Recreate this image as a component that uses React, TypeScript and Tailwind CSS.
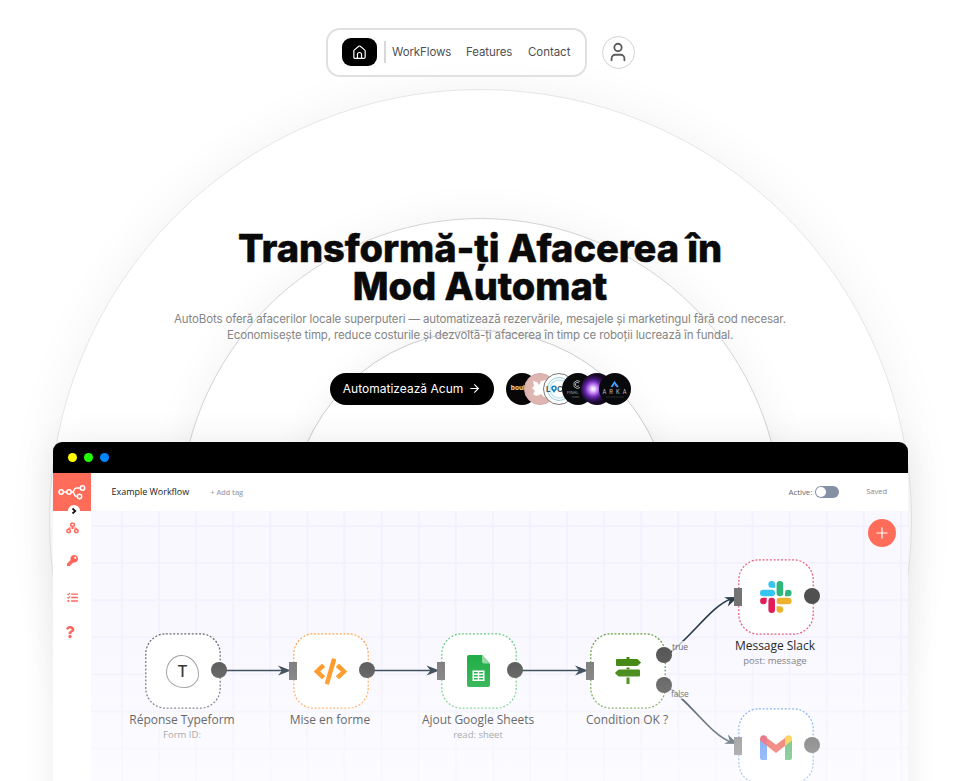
import React from "react";
import { User, ArrowRight } from "lucide-react";
import { FaKey, FaQuestion, FaCode, FaTasks } from "react-icons/fa";

const rings = [
  "left-[49px] top-[88.5px] h-[863px] w-[863px] border-[#e6e6e6] shadow-[0_0_50px_rgba(0,0,0,0.055)]",
  "left-[179px] top-[218px] h-[603px] w-[603px] border-[#d3d3d3] shadow-[0_0_44px_rgba(0,0,0,0.055)]",
  "left-[290px] top-[330px] h-[381px] w-[381px] border-[#cccccc] shadow-[0_0_36px_rgba(0,0,0,0.055)]",
];

function Nav() {
  return (
    <nav className="flex items-center justify-center gap-[15px] pr-px pt-[27.5px]">
      <div className="flex h-[49px] w-[261px] items-center rounded-[14px] border-2 border-[#e0e0e0] bg-white/60 pl-[14px]">
        <span className="flex h-[28px] w-[35px] items-center justify-center rounded-[9px] bg-black text-white">
          <svg width="13" height="15" viewBox="0 0 14 16" fill="none" stroke="#fff" strokeWidth="1.3" strokeLinejoin="round">
            <path d="M.9 6.4q0-.7.6-1.2L6.2 1.3q.8-.6 1.6 0l4.7 3.9q.6.5.6 1.2v6.4q0 1.6-1.6 1.6h-9q-1.6 0-1.6-1.6z" />
            <path d="M4.8 14V10.200a2.200 2.200 0 0 1 4.400 0V14" />
          </svg>
        </span>
        <span className="ml-[7px] h-[22px] w-[2px] bg-[#d8d8d8]" />
        <div className="ml-[6.5px] flex gap-[15px] whitespace-nowrap text-[11.5px] leading-4 text-[#505050]">
          <a className="w-[59px] tracking-[-0.1px]">WorkFlows</a>
          <a className="w-[47px] tracking-[-0.1px]">Features</a>
          <a className="tracking-[-0.05px]">Contact</a>
        </div>
      </div>
      <div className="flex h-[33px] w-[33px] items-center justify-center rounded-full border-[1.5px] border-[#d2d2d2] bg-white text-[#5c5c5c]">
        <User size={22} strokeWidth={2} />
      </div>
    </nav>
  );
}

function Avatars() {
  return (
    <div className="flex pl-[12px] [&>*]:shrink-0">
      <span className="flex h-8 w-8 items-center overflow-hidden rounded-full bg-[#080606] pl-[5px] text-[6.5px] font-extrabold text-[#e0cd96]">boul</span>
      <span className="-ml-[13.3px] flex h-8 w-8 items-center overflow-hidden rounded-full border border-[#d2aaa7] bg-[#dfb5b1] pl-[7px]">
        <svg width="15" height="17" viewBox="0 0 15 17" fill="#fff"><path d="M1 1l4 1 2 3 2-4 6-1v17h-3l-3-3-2 1-3 1-3-2 2-3-3-3 2-2z" /></svg>
      </span>
      <span className="-ml-[13.3px] flex h-8 w-8 items-center justify-center overflow-hidden rounded-full border border-[#777] bg-white">
        <svg width="30" height="30" viewBox="0 0 30 30" fill="none">
          <circle cx="15" cy="15" r="11.5" stroke="#94ccdc" strokeWidth="1" />
          <circle cx="15" cy="15" r="9" stroke="#c9e8ee" strokeWidth="1.5" />
          <circle cx="10" cy="14.3" r="2" fill="#fff" stroke="#1685c4" strokeWidth="1.6" /><path d="M8.5 16.500L10 19L11.500 16.500" fill="#1685c4" />
          <text x="2" y="17.500" fill="#365b6e" fontSize="8" fontWeight="700">L</text>
          <text x="13" y="17.500" fill="#365b6e" fontSize="8" fontWeight="700">C</text>
        </svg>
      </span>
      <span className="-ml-[13.3px] h-8 w-8 overflow-hidden rounded-full bg-[#090a0c]">
        <svg width="32" height="32" viewBox="0 0 32 32" fill="none">
          <path d="M18 8.500l-3-1-3 2v4l3 2 3-1M17 10l-2-.7-1.500 1v2.200l1.500 1 2-.7" stroke="#a9aaad" strokeWidth="1" />
          <text x="5" y="21" fill="#aaa" fontSize="4">FINAL</text><text x="10" y="24.500" fill="#777" fontSize="2.500">studio</text>
        </svg>
      </span>
      <span className="-ml-[13.3px] h-8 w-8 overflow-hidden rounded-full bg-[radial-gradient(circle_at_38%_50%,#f7e9ff_0_5%,#cf9df7_14%,#a05be0_23%,#6e2bb0_31%,#35125f_43%,#14091f_58%)]" />
      <span className="-ml-[13.3px] h-8 w-8 overflow-hidden rounded-full bg-[#08090c]">
        <svg width="32" height="32" viewBox="0 0 32 32" fill="none">
          <path d="M12.500 14l3-4.500 3.500 4.500" stroke="#3da7ff" strokeWidth="1.8" /><path d="M16 12l2.500 2" stroke="#7e65e6" strokeWidth="1.3" />
          <text x="3.500" y="21" fill="#c5c5c5" fontSize="5.500" textLength="24">ARKA</text>
          <path d="M7 24h18" stroke="#555" strokeWidth=".7" strokeDasharray="1 .6" />
        </svg>
      </span>
    </div>
  );
}

function Hero() {
  return (
    <header className="flex h-[365.5px] flex-col items-center pr-px pt-[152px] text-center">
      <h1 className="whitespace-nowrap text-[38px] font-extrabold leading-[38px] tracking-[-0.07px] text-[#0a0a0a] [-webkit-text-stroke:0.5px_#0a0a0a]">
        Transformă-ți Afacerea în<br />Mod Automat
      </h1>
      <p className="mt-[6px] whitespace-nowrap text-[11.5px] leading-4 tracking-[-0.13px] text-[#858585]">
        AutoBots oferă afacerilor locale superputeri — automatizează rezervările, mesajele și marketingul fără cod necesar.<br />
        Economisește timp, reduce costurile și dezvoltă-ți afacerea în timp ce roboții lucrează în fundal.
      </p>
      <div className="mt-[30px] flex items-center pl-px">
        <button className="flex h-8 w-[164px] items-center whitespace-nowrap rounded-full bg-black pl-[13px] text-[12px] text-white">
          <span className="w-[121px] text-left tracking-[0.02px]">Automatizează Acum</span>
          <ArrowRight className="ml-[4px] shrink-0" size={13} strokeWidth={2} />
        </button>
        <Avatars />
      </div>
    </header>
  );
}

function Sidebar() {
  return (
    <aside className="flex w-[38px] shrink-0 flex-col items-center bg-white text-[#ff6659]">
      <div className="relative flex h-[38px] w-[38px] items-center justify-center bg-[#ff6d5a]">
        <svg width="28" height="18" viewBox="0 0 28 18" fill="none" stroke="#fff" strokeWidth="1.5">
          <circle cx="3.2" cy="9" r="2.2" /><circle cx="11" cy="9" r="2.2" /><circle cx="24.500" cy="5" r="2.2" /><circle cx="21.500" cy="13.500" r="2.2" />
          <path d="M5.500 9h3.200M13.200 9h1.300c2 0 .8-4 4-4h3.500M14.500 9c2 0 1 4.500 4.500 4.500" />
        </svg>
        <span className="absolute left-[15px] top-[32px] flex h-3 w-3 items-center justify-center rounded-full bg-white">
          <svg width="6" height="8" viewBox="0 0 6 8" fill="none" stroke="#111" strokeWidth="1.7"><path d="M1.500 1.500L4.300 4L1.500 6.500" /></svg>
        </span>
      </div>
      <svg className="mt-[11px] ml-px" width="13" height="12" viewBox="0 0 13 12" fill="none" stroke="currentColor" strokeWidth="1.5">
        <rect x="4.700" y="1.200" width="3.600" height="3" rx="1" /><rect x="1" y="7.500" width="3.300" height="3" rx="1" /><rect x="8.700" y="7.500" width="3.300" height="3" rx="1" /><path d="M6.500 4v3M2.700 7V6h7.600v1" strokeWidth="1" />
      </svg>
      <FaKey className="mt-[21px]" size={11} />
      <FaTasks className="mt-[26px]" size={11} />
      <FaQuestion className="mt-[23px] -ml-[4px]" size={12} />
    </aside>
  );
}

function SlackMark() {
  return (
    <svg width="32" height="32" viewBox="0 0 32 32">
      <g fill="#36c5f0"><rect x="0" y="8.700" width="15" height="6.600" rx="3.300" /><path d="M15 6.700h-3.300a3.300 3.300 0 1 1 3.300-3.300z" /></g>
      <g fill="#2eb67d"><rect x="16.600" y="0" width="6.600" height="15.300" rx="3.300" /><path d="M25 15.300V12a3.300 3.300 0 1 1 3.300 3.300z" /></g>
      <g fill="#ecb22e"><rect x="16.600" y="16.700" width="15" height="6.600" rx="3.300" /><path d="M16.600 25.300h3.300a3.300 3.300 0 1 1-3.300 3.300z" /></g>
      <g fill="#e01e5a"><rect x="8.400" y="16.700" width="6.600" height="15.300" rx="3.300" /><path d="M6.700 16.700V20a3.300 3.300 0 1 1-3.300-3.300z" /></g>
    </svg>
  );
}

function GmailMark() {
  return (
    <svg width="32" height="25" viewBox="0 0 32 25">
      <path fill="#4285f4" d="M0 5l7 5v15H2a2 2 0 0 1-2-2z" /><path fill="#34a853" d="M25 10l7-5v18a2 2 0 0 1-2 2h-5z" />
      <path fill="#ea4335" d="M7 3l9 6.700L25 3v8l-9 7-9-7z" /><path fill="#d92c45" d="M0 4C0 0 4-1 7 2v9L0 5.500z" /><path fill="#fbbc04" d="M25 2c3-3 7-2 7 2v1.500L25 11z" />
    </svg>
  );
}

function SheetsMark() {
  return (
    <svg width="24" height="32" viewBox="0 0 24 32">
      <path fill="#12a93a" d="M2 0h13l8 8.500V30a2 2 0 0 1-2 2H2a2 2 0 0 1-2-2V2a2 2 0 0 1 2-2z" /><path fill="#8ed5a0" d="M15 0l8 8.500h-6a2 2 0 0 1-2-2z" />
      <path fill="none" stroke="#fff" strokeWidth="1.400" d="M6.200 16.200h10.600v9H6.200zM6 19.200h11M6 22.200h11M11.500 16v9" />
    </svg>
  );
}

function SignsMark() {
  return (
    <svg width="26" height="28" viewBox="0 0 26 28" fill="#348000">
      <path d="M11.500 0h3v2h-3zM11.500 10.500h3v2h-3zM11.500 20.500h3V27h-3z" />
      <path d="M2 2h20q.6 0 1 .4l2.600 2.500q.6.600 0 1.200L23 8.600q-.4.400-1 .4H2q-1 0-1-1V3q0-1 1-1z" />
      <path d="M24 12.500H4q-.6 0-1 .4L.4 15.400q-.6.600 0 1.200L3 19.100q.4.400 1 .4h20q1 0 1-1v-5q0-1-1-1z" />
    </svg>
  );
}

function TypeformMark() {
  return (
    <span className="flex h-[33px] w-[33px] items-center justify-center rounded-[47%_53%_46%_54%/53%_60%_40%_47%] border border-[#999]">
      <span className="font-['Inter',sans-serif] text-[16px] font-medium text-[#222]">T</span>
    </span>
  );
}

const nodes = [
  { box: "left-[54px] top-[122px]", stroke: "#65666c", label: "Réponse Typeform", sub: "Form ID:", icon: <TypeformMark />, input: false, output: true },
  { box: "left-[202px] top-[122px]", stroke: "#ffa250", label: "Mise en forme", sub: "", icon: <FaCode size={33} color="#ff9015" />, input: true, output: true },
  { box: "left-[350px] top-[122px]", stroke: "#67c77f", label: "Ajout Google Sheets", sub: "read: sheet", icon: <SheetsMark />, input: true, output: true },
  { box: "left-[499px] top-[122px]", stroke: "#639c3d", label: "Condition OK ?", sub: "", icon: <SignsMark />, input: true, output: false },
  { box: "left-[647px] top-[48px]", stroke: "#e75b7c", label: "Message Slack", sub: "post: message", icon: <SlackMark />, input: true, output: true },
  { box: "left-[647px] top-[196.5px]", stroke: "#5b98f0", label: "", sub: "", icon: <span className="pt-1"><GmailMark /></span>, input: true, output: true },
];

function Canvas() {
  return (
    <div className="relative min-h-0 flex-1 overflow-hidden bg-[#f9f8ff] bg-[linear-gradient(to_right,#f3f1fd_1.5px,transparent_1.5px),linear-gradient(to_bottom,#f3f1fd_1.5px,transparent_1.5px)] bg-[size:37.1px_37.1px] bg-[position:30px_14px]">
      <svg className="absolute inset-0" width="817" height="270" fill="none" stroke="#2b3b4a" strokeWidth="1.7">
        <path d="M129 159.500H192M277 159.500H340M425 159.500H488" />
        <path d="M575 145C602 125 620 95 640 88M575 174C602 194 620 224 640 231" />
        <g fill="#2b3b4a" stroke="none">
          {[200, 348.500, 497].map((x) => <path key={x} transform={`translate(${x} 159.5)`} d="M0 0L-13-5L-9 0L-13 5Z" />)}
          <path transform="translate(647 86) rotate(-22)" d="M0 0L-13-5L-9 0L-13 5Z" /><path transform="translate(647 233) rotate(22)" d="M0 0L-13-5L-9 0L-13 5Z" />
        </g>
      </svg>
      {nodes.map((n, i) => (
        <div key={i} className={"absolute h-[76px] w-[76px] rounded-[21px] bg-white " + n.box}>
          <svg className="absolute inset-0" width="76" height="76" fill="none">
            <rect x=".8" y=".8" width="74.400" height="74.400" rx="20" stroke={n.stroke} strokeWidth="1.250" strokeDasharray="2 1.700" />
          </svg>
          <div className="flex h-full items-center justify-center pr-px">{n.icon}</div>
          {n.input && <span className="absolute -left-[4px] top-[29px] h-[18px] w-2 bg-[#747474]" />}
          {n.output && <span className="absolute -right-[6px] top-[29px] h-4 w-4 rounded-full bg-[#505050]" />}
          {!n.output && <><span className="absolute -right-[6px] top-[14px] h-4 w-4 rounded-full bg-[#505050]" /><span className="absolute -right-[6px] top-[44px] h-4 w-4 rounded-full bg-[#505050]" /></>}
          <div className="absolute left-[37px] top-[78px] w-[140px] -translate-x-1/2 whitespace-nowrap text-center">
            <div className="text-[12px] leading-[18px] tracking-[-0.02px] text-[#242424]">{n.label}</div><div className="text-[9.5px] leading-[12px] text-[#777]">{n.sub}</div>
          </div>
        </div>
      ))}
      <span className="absolute left-[581px] top-[130px] bg-[#f9f8ff]/70 text-[8.5px] leading-[11px] tracking-[-0.15px] text-[#666]">true</span>
      <span className="absolute left-[580px] top-[177px] bg-[#f9f8ff]/70 text-[8.5px] leading-[11px] tracking-[-0.2px] text-[#555]">false</span>
      <button className="absolute left-[777px] top-[8px] flex h-7 w-7 items-center justify-center rounded-full bg-[#ff6d5a]">
        <svg width="12" height="12" stroke="#fff" strokeWidth="1.2"><path d="M6 .5v11M.5 6h11" /></svg>
      </button>
    </div>
  );
}

function WorkflowWindow() {
  return (
    <section className="relative ml-[53px] flex h-[339px] w-[855px] flex-col overflow-hidden rounded-t-[9px] bg-white font-['Open_Sans','Noto_Sans',sans-serif]">
      <div className="flex h-[31px] shrink-0 items-center gap-[7px] bg-black pl-[15px]">
        <span className="h-[9px] w-[9px] rounded-full bg-[#fffb00]" /><span className="h-[9px] w-[9px] rounded-full bg-[#20ff00]" /><span className="h-[9px] w-[9px] rounded-full bg-[#0087ff]" />
      </div>
      <div className="flex min-h-0 flex-1">
        <Sidebar />
        <div className="flex min-w-0 flex-1 flex-col">
          <div className="flex h-[38px] shrink-0 items-center whitespace-nowrap bg-white pl-[20.5px] pr-[21px]">
            <span className="w-[79px] text-[9px] tracking-[-0.02px] text-[#222]">Example Workflow</span>
            <span className="ml-[20px] text-[7.2px] font-semibold text-[#a1a4ad]">+ Add tag</span>
            <span className="ml-auto text-[8px] tracking-[-0.1px] text-[#646871]">Active:</span>
            <span className="ml-[3px] flex h-3 w-6 items-center rounded-full bg-[#8490a4] pl-px"><i className="h-[10px] w-[10px] rounded-full bg-white" /></span>
            <span className="ml-[27px] text-[7.5px] text-[#85899a]">Saved</span>
          </div>
          <Canvas />
        </div>
      </div>
      <div className="pointer-events-none absolute inset-x-0 bottom-0 h-[141px] bg-[linear-gradient(to_bottom,rgba(255,255,255,0),rgba(255,255,255,0.54))]" />
    </section>
  );
}

export default function App() {
  return (
    <main className="relative h-[781px] w-[961px] overflow-hidden bg-white font-['Inter',sans-serif]">
      {rings.map((ring) => <div key={ring} className={"absolute rounded-full border-[1.5px] bg-white " + ring} />)}
      <div className="absolute left-[53px] top-[442px] h-[400px] w-[855px] rounded-t-[9px] shadow-[0_0_35px_rgba(0,0,0,0.08)]" />
      <div className="relative"><Nav /><Hero /><WorkflowWindow /></div>
    </main>
  );
}
